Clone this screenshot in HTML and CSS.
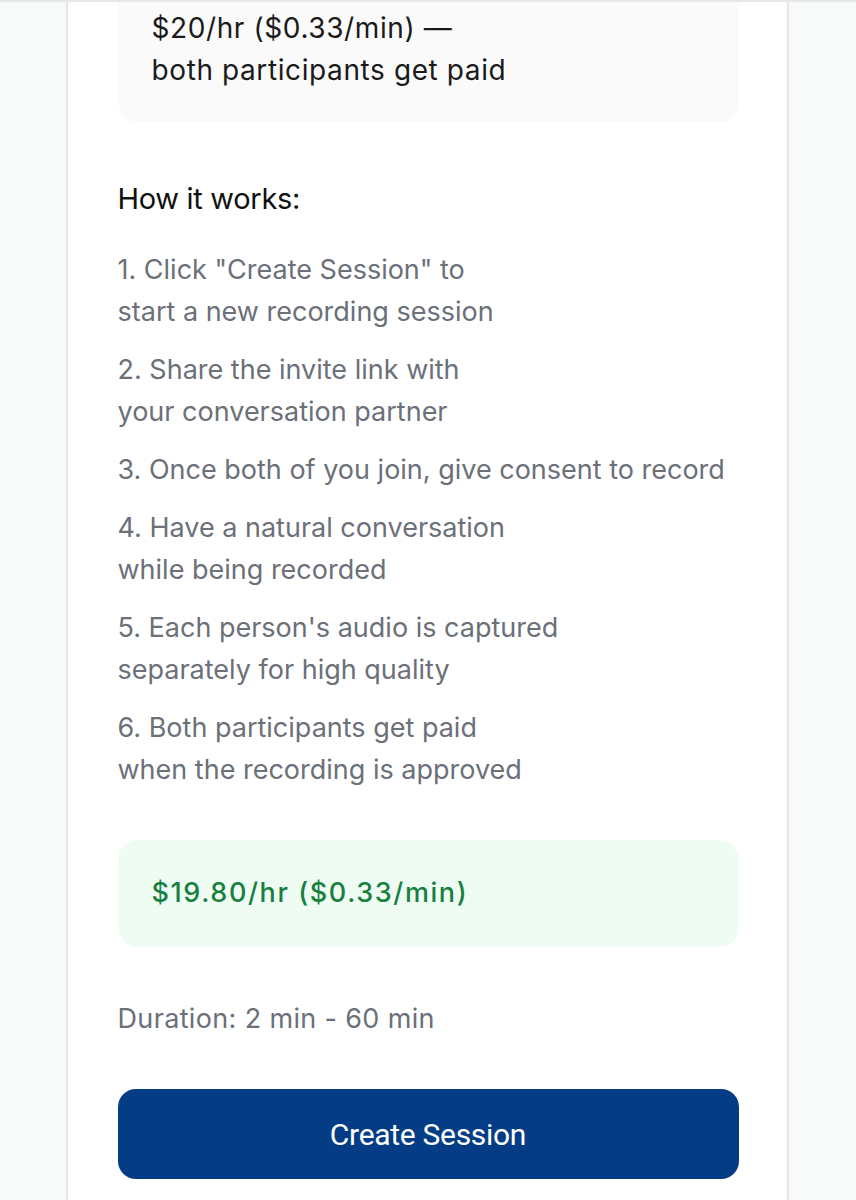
FILE: index.html
```html
<!DOCTYPE html>
<html lang="en">
<head>
<meta charset="utf-8">
<title>Create Session</title>
<link rel="stylesheet" href="styles.css">
</head>
<body>
<div class="page">
  <main class="card">
    <div class="pay-box">
      <p class="pay-text">$20/hr ($0.33/min) —<br>both participants get paid</p>
    </div>
    <h2 class="how-title">How it works:</h2>
    <ol class="steps">
      <li>1. Click "Create Session" to<br>start a new recording session</li>
      <li>2. Share the invite link with<br>your conversation partner</li>
      <li>3. Once both of you join, give consent to record</li>
      <li>4. Have a natural conversation<br>while being recorded</li>
      <li>5. Each person's audio is captured<br>separately for high quality</li>
      <li>6. Both participants get paid<br>when the recording is approved</li>
    </ol>
    <div class="rate-box">
      <p class="rate-text">$19.80/hr ($0.33/min)</p>
    </div>
    <p class="duration">Duration: 2 min - 60 min</p>
    <button class="create-btn" type="button">Create Session</button>
  </main>
</div>
</body>
</html>
```
FILE: styles.css
```css
* { box-sizing: border-box; }
html, body {
  margin: 0;
  padding: 0;
  background: #f8f9f9;
  font-family: Inter, "Noto Sans", sans-serif;
}
.page {
  border-top: 2px solid #e6e7e8;
  height: 1200px;
  overflow: hidden;
  display: flex;
  justify-content: center;
  align-items: flex-start;
}
.card {
  width: 723px;
  margin-left: -2px;
  margin-top: -2px;
  background: #fff;
  border-left: 2px solid #e5e6e8;
  border-right: 2px solid #e5e6e8;
  padding: 0 48px 60px 50px;
  display: flex;
  flex-direction: column;
}
.card > * { flex-shrink: 0; }
.pay-box {
  background: #fafafa;
  border-radius: 0 0 22px 22px;
  padding: 7px 34px 32px 34px;
}
.pay-text {
  margin: 0;
  font-size: 28px;
  line-height: 42px;
  color: #1a1a1a;
  letter-spacing: 0.6px;
}
.how-title {
  margin: 58px 0 0 0;
  font-weight: 400;
  font-size: 29px;
  line-height: 36px;
  letter-spacing: -0.3px;
  color: #111;
}
.steps {
  list-style: none;
  margin: 32px 0 0 0;
  padding: 0;
  display: flex;
  flex-direction: column;
  gap: 16px;
}
.steps li {
  font-size: 27px;
  line-height: 42px;
  color: #6b7079;
}
.rate-box {
  margin-top: 49px;
  background: #effcf3;
  border-radius: 20px;
  padding: 32px 34px 33px;
}
.rate-text {
  margin: 0;
  font-size: 27px;
  line-height: 42px;
  font-weight: 500;
  color: #17803f;
  letter-spacing: 1.6px;
}
.duration {
  margin: 51px 0 0 0;
  font-size: 27px;
  line-height: 42px;
  color: #6b7079;
  letter-spacing: 0.35px;
}
.create-btn {
  margin-top: 49px;
  height: 90px;
  border: none;
  border-radius: 18px;
  background: #043c85;
  color: #fff;
  font-family: Roboto, "Liberation Sans", sans-serif;
  font-size: 30px;
  letter-spacing: -0.3px;
}
```
